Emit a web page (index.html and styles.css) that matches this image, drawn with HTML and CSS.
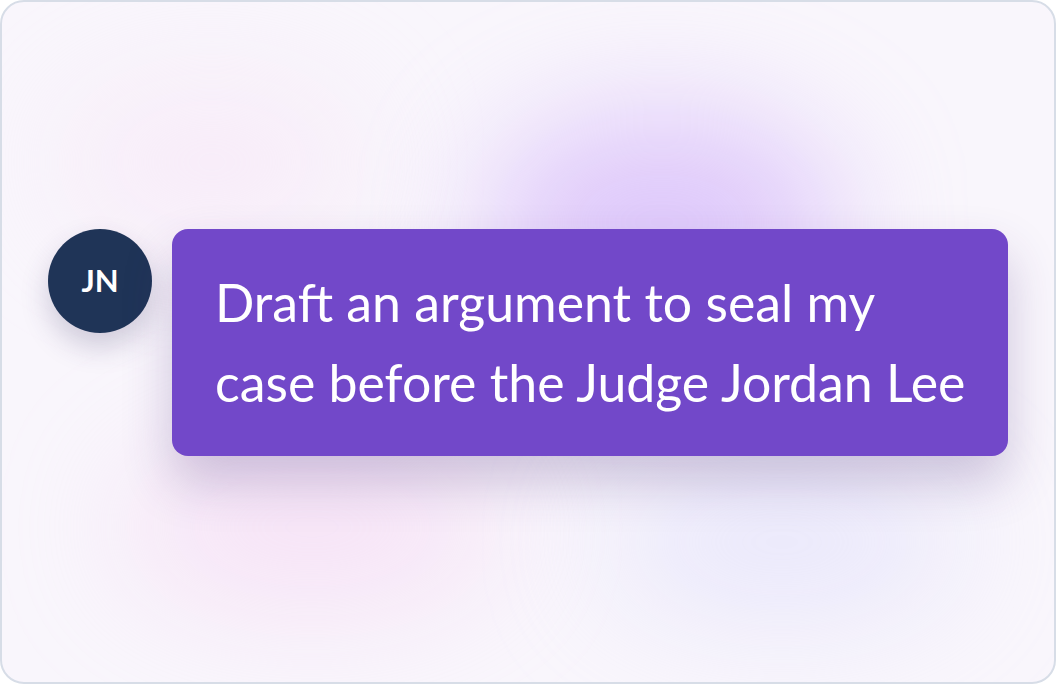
FILE: index.html
```html
<!DOCTYPE html>
<html lang="en">
<head>
<meta charset="utf-8">
<title>Chat</title>
<link rel="stylesheet" href="styles.css">
</head>
<body>
<div class="frame">
  <div class="glow glow-a"></div>
  <div class="glow glow-b"></div>
  <div class="glow glow-c"></div>
  <div class="glow glow-d"></div>
  <div class="row">
    <div class="avatar">JN</div>
    <div class="bubble">Draft an argument to seal my<br>case before the Judge Jordan Lee</div>
  </div>
</div>
</body>
</html>
```
FILE: styles.css
```css
html, body {
  margin: 0;
  padding: 0;
  width: 1056px;
  height: 684px;
  background: #ffffff;
  overflow: hidden;
}
.frame {
  position: relative;
  box-sizing: border-box;
  width: 1056px;
  height: 684px;
  border: 2px solid #d7dde7;
  border-radius: 24px;
  background: #f9f6fc;
  overflow: hidden;
  font-family: Lato, "Noto Sans", sans-serif;
  display: flex;
  align-items: flex-start;
  padding: 227px 0 0 46px;
}
.glow {
  position: absolute;
  border-radius: 50%;
  filter: blur(60px);
  pointer-events: none;
}
.glow-a {
  left: 480px;
  top: 110px;
  width: 360px;
  height: 220px;
  background: rgba(205, 170, 250, 0.6);
}
.glow-b {
  left: 120px;
  top: 440px;
  width: 380px;
  height: 170px;
  background: rgba(245, 205, 240, 0.45);
}
.glow-c {
  left: 600px;
  top: 460px;
  width: 360px;
  height: 160px;
  background: rgba(215, 215, 250, 0.45);
}
.glow-d {
  left: 60px;
  top: 80px;
  width: 300px;
  height: 160px;
  background: rgba(248, 225, 246, 0.5);
}
.row {
  position: relative;
  display: flex;
  align-items: flex-start;
  gap: 20px;
}
.avatar {
  flex: none;
  width: 104px;
  height: 104px;
  border-radius: 50%;
  background: #1f3457;
  color: #ffffff;
  font-size: 31px;
  font-weight: 700;
  display: flex;
  align-items: center;
  justify-content: center;
  padding-bottom: 2px;
  box-sizing: border-box;
  box-shadow: 0 14px 28px rgba(60, 50, 100, 0.22);
}
.bubble {
  box-sizing: border-box;
  width: 836px;
  height: 227px;
  border-radius: 16px;
  background: #7248c9;
  color: #ffffff;
  font-size: 51.8px;
  line-height: 80px;
  padding: 33px 30px 0 43px;
  white-space: nowrap;
  box-shadow: 0 26px 50px rgba(70, 40, 120, 0.24);
}
```
